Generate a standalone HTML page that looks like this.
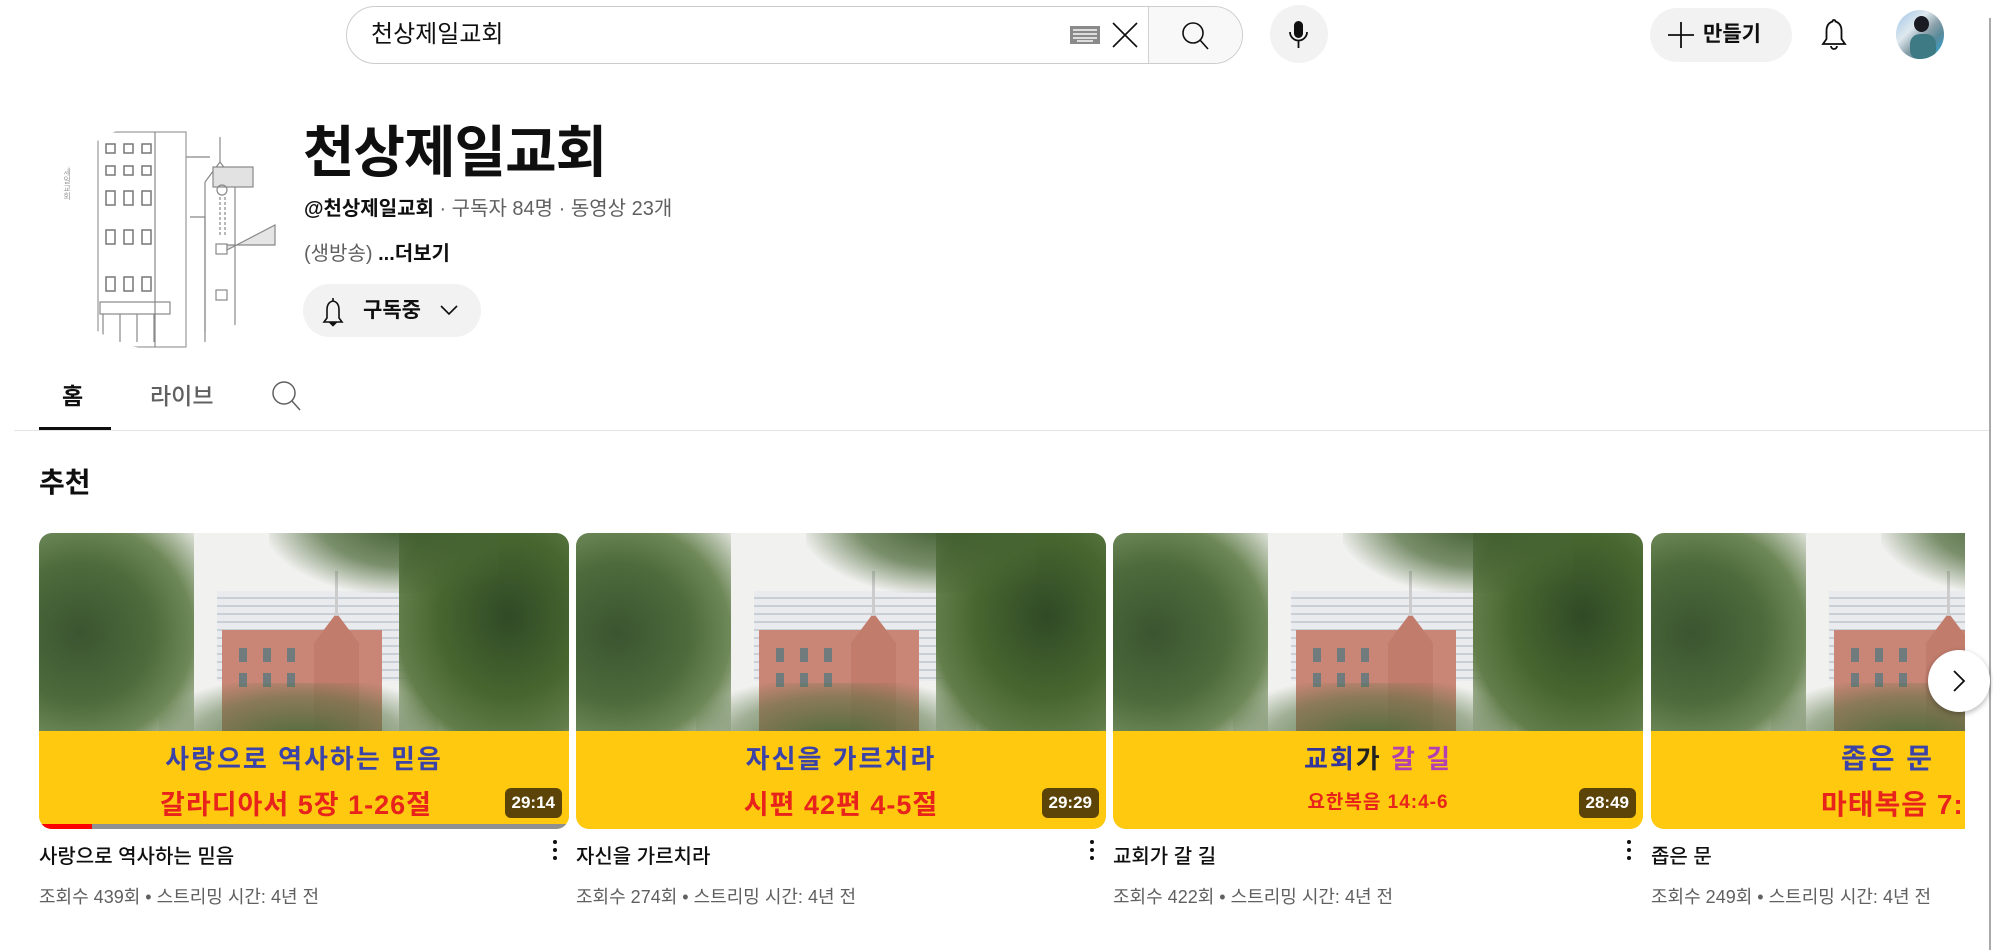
<!DOCTYPE html>
<html><head><meta charset="utf-8">
<style>
*{box-sizing:border-box;margin:0;padding:0}
body{width:1993px;height:950px;overflow:hidden;background:#fff;font-family:"Liberation Sans","Noto Sans CJK KR",sans-serif;color:#0f0f0f;position:relative}
.abs{position:absolute}
.search{left:346px;top:6px;width:897px;height:58px;border:1px solid #ccc;border-radius:29px;overflow:hidden}
.search .txt{position:absolute;left:24px;top:0;line-height:56px;font-size:24px;color:#0f0f0f}
.search .btn{position:absolute;right:0;top:0;width:94px;height:56px;background:#f8f8f8;border-left:1px solid #d3d3d3}
.circ{border-radius:50%}
.card{position:absolute;top:533px;width:530px;height:300px}
.thumb{position:absolute;left:0;top:0;width:530px;height:296px;border-radius:13px;overflow:hidden;background:#f1f1ef}
.t{position:absolute}
.band{position:absolute;left:0;top:198px;width:530px;height:98px;background:#fec90f}
.l1{position:absolute;left:0;width:530px;top:206px;text-align:center;font-size:26px;font-weight:bold;color:#3b42a8;letter-spacing:2px;line-height:40px}
.l2{position:absolute;left:0;width:530px;top:252px;text-align:center;font-size:27px;font-weight:bold;color:#e8231c;letter-spacing:1px;line-height:40px}
.dur{position:absolute;right:7px;top:255px;height:30px;padding:0 7px;background:#5c4408;color:#fff;font-size:17px;font-weight:bold;line-height:30px;border-radius:6px}
.title{position:absolute;left:0;top:310px;font-size:20px;font-weight:500;line-height:28px}
.meta{position:absolute;left:0;top:351px;font-size:18px;color:#606060;line-height:26px}
.kebab{position:absolute;right:12px;top:307px;width:4px}
.kebab i{display:block;width:4px;height:4px;border-radius:2px;background:#0f0f0f;margin-bottom:4px}
.apt{left:178px;top:58px;width:245px;height:90px;background:repeating-linear-gradient(#e9ebee 0 6px,#c9cfd4 6px 8px)}
.bld{left:183px;top:97px;width:160px;height:103px;background:#c98676}
.win{background:repeating-linear-gradient(90deg,#6f7b7c 0 8px,transparent 8px 24px)}
.tw{left:275px;top:80px;width:45px;height:120px;background:#c17c6c;clip-path:polygon(50% 0,100% 25%,100% 100%,0 100%,0 25%)}
.cr{left:296px;top:38px;width:3px;height:45px;background:#ccc}
.tl{left:-20px;top:-10px;width:175px;height:220px;background:radial-gradient(ellipse at 35% 50%,#3a5530 0%,#4d6b3c 45%,#6e8858 70%,rgba(140,160,120,0) 100%)}
.tr{left:360px;top:-20px;width:200px;height:230px;background:radial-gradient(ellipse at 55% 45%,#2f4a26 0%,#47662f 45%,#637e4b 72%,rgba(110,140,90,0) 100%)}
.tt{left:230px;top:-30px;width:230px;height:90px;background:radial-gradient(ellipse at 60% 20%,#3d5a2c 0%,rgba(70,100,50,.7) 45%,rgba(255,255,255,0) 75%)}
.tb{left:120px;top:150px;width:280px;height:60px;background:radial-gradient(ellipse at 50% 100%,#4b6a3a 0%,rgba(80,110,60,.5) 55%,rgba(0,0,0,0) 80%)}
</style></head><body>

<div class="abs search"><div class="txt">천상제일교회</div>
<svg class="abs" style="left:723px;top:19px" width="30" height="18"><rect width="30" height="18" fill="#8a8a8a"/><g fill="#ddd"><rect x="3" y="3" width="24" height="2"/><rect x="3" y="7" width="24" height="2"/><rect x="3" y="11" width="24" height="2"/><rect x="7" y="14" width="16" height="2"/></g></svg>
<svg class="abs" style="left:763px;top:13px" width="30" height="30"><path d="M3 3L27 27M27 3L3 27" stroke="#0f0f0f" stroke-width="1.6"/></svg>
<div class="btn"><svg class="abs" style="left:31px;top:14px" width="30" height="30"><circle cx="13" cy="12" r="10" fill="none" stroke="#0f0f0f" stroke-width="1.6"/><path d="M20 19L28 28" stroke="#0f0f0f" stroke-width="1.6"/></svg></div>
</div>
<div class="abs circ" style="left:1270px;top:5px;width:58px;height:58px;background:#f2f2f2"><svg class="abs" style="left:17px;top:14px" width="24" height="32"><rect x="7" y="2" width="9" height="17" rx="4.5" fill="#0f0f0f"/><path d="M3 13a8.5 8.5 0 0 0 17 0M11.5 21v8" stroke="#0f0f0f" stroke-width="1.8" fill="none"/></svg></div>
<div class="abs" style="left:1650px;top:8px;width:142px;height:54px;border-radius:27px;background:#f2f2f2">
<svg class="abs" style="left:18px;top:14px" width="26" height="26"><path d="M13 0V26M0 13H26" stroke="#0f0f0f" stroke-width="1.8"/></svg>
<div class="abs" style="left:53px;top:0;line-height:54px;font-size:21px;font-weight:bold">만들기</div></div>
<svg class="abs" style="left:1820px;top:18px" width="28" height="34"><path d="M14 2c-1 0-1.5.7-1.5 1.5C8 5 6.5 8.5 6.5 13v8L3 26h22l-3.5-5v-8c0-4.5-1.5-8-6-9.5C15.5 2.7 15 2 14 2z M11 28a3 3 0 0 0 6 0" fill="none" stroke="#0f0f0f" stroke-width="1.8"/></svg>
<div class="abs circ" style="left:1896px;top:10px;width:48px;height:49px;overflow:hidden;background:linear-gradient(135deg,#9cc4e8 0%,#dfe8ee 35%,#8aa0aa 55%,#5a8a9a 70%,#2aa8e0 100%)"><div class="abs circ" style="left:18px;top:6px;width:15px;height:16px;background:#1a1a22"></div><div class="abs" style="left:14px;top:24px;width:26px;height:26px;border-radius:10px;background:#3d7a84"></div></div>
<div class="abs" style="left:1989px;top:18px;width:2px;height:932px;background:#aaa"></div>

<div class="abs circ" style="left:45px;top:122px;width:234px;height:228px;overflow:hidden;background:#fff">
<svg width="234" height="228" style="position:absolute;left:0;top:0" fill="none" stroke="#888" stroke-width="1.2">
<rect x="53" y="10" width="88" height="215" stroke="#999"/>
<line x1="110" y1="10" x2="110" y2="225"/>
<g stroke="#777" stroke-width="1.5">
<rect x="61" y="22" width="9" height="9"/><rect x="79" y="22" width="9" height="9"/><rect x="97" y="22" width="9" height="9"/>
<rect x="61" y="44" width="9" height="9"/><rect x="79" y="44" width="9" height="9"/><rect x="97" y="44" width="9" height="9"/>
<rect x="61" y="69" width="9" height="14"/><rect x="79" y="69" width="9" height="14"/><rect x="97" y="69" width="9" height="14"/>
<rect x="61" y="108" width="9" height="14"/><rect x="79" y="108" width="9" height="14"/><rect x="97" y="108" width="9" height="14"/>
<rect x="61" y="155" width="9" height="14"/><rect x="79" y="155" width="9" height="14"/><rect x="97" y="155" width="9" height="14"/>
</g>
<rect x="55" y="180" width="70" height="12"/>
<path d="M58 192V220M75 192V220M92 192V220M109 192V220"/>
<path d="M141 35H165M175 40V10"/>
<path d="M160 60L175 40L190 60V210M160 60V210"/>
<rect x="168" y="45" width="40" height="20" fill="#e2e2e2"/>
<circle cx="177" cy="68" r="5"/>
<path d="M175 75v40M180 75v40" stroke-dasharray="3 2"/>
<rect x="171" y="122" width="11" height="10"/><rect x="171" y="168" width="11" height="10"/>
<path d="M182 128L230 103V123H182z" fill="#e5e5e5"/>
<path d="M145 95H160V220"/>
<g fill="#999" stroke="none" font-size="8"><text x="22" y="30" writing-mode="tb">천상제일교회</text></g>
</svg></div>

<div class="abs" style="left:303px;top:115px;font-size:56px;font-weight:bold;line-height:76px;letter-spacing:-1px">천상제일교회</div>
<div class="abs" style="left:304px;top:195px;font-size:20px;line-height:28px;color:#606060"><b style="color:#0f0f0f">@천상제일교회</b> · 구독자 84명 · 동영상 23개</div>
<div class="abs" style="left:304px;top:240px;font-size:20px;line-height:28px;color:#606060">(생방송) <b style="color:#0f0f0f">...더보기</b></div>
<div class="abs" style="left:303px;top:284px;width:178px;height:53px;border-radius:27px;background:#f2f2f2">
<svg class="abs" style="left:18px;top:13px" width="24" height="30"><path d="M12 1v3C7 5 6 9 6 13v8l-3 4h18l-3-4v-8c0-4-1-8-6-9M10 26.5h4l-2 2z" fill="none" stroke="#0f0f0f" stroke-width="1.6"/></svg>
<div class="abs" style="left:60px;top:0;line-height:53px;font-size:21px;font-weight:bold">구독중</div>
<svg class="abs" style="left:137px;top:20px" width="18" height="12"><path d="M1 2L9 10L17 2" fill="none" stroke="#0f0f0f" stroke-width="1.6"/></svg>
</div>

<div class="abs" style="left:62px;top:380px;font-size:23px;font-weight:bold;line-height:32px">홈</div>
<div class="abs" style="left:150px;top:380px;font-size:23px;color:#606060;font-weight:500;line-height:32px">라이브</div>
<svg class="abs" style="left:270px;top:380px" width="32" height="32"><circle cx="14" cy="13" r="11" fill="none" stroke="#606060" stroke-width="1.5"/><path d="M22 21L30 30" stroke="#606060" stroke-width="1.5"/></svg>
<div class="abs" style="left:39px;top:427px;width:72px;height:3px;background:#0f0f0f"></div>
<div class="abs" style="left:14px;top:430px;width:1975px;height:1px;background:#e5e5e5"></div>

<div class="abs" style="left:39px;top:465px;font-size:28px;font-weight:bold;line-height:36px">추천</div>

<div class="abs" style="left:0;top:0;width:1965px;height:950px;overflow:hidden">
<div class="card" style="left:39px">
 <div class="thumb">
  <div class="t apt"></div><div class="t bld"></div>
  <div class="t win" style="left:200px;top:115px;width:70px;height:14px"></div>
  <div class="t win" style="left:200px;top:140px;width:70px;height:14px"></div>
  <div class="t tw"></div><div class="t cr"></div>
  <div class="t tl"></div><div class="t tr"></div><div class="t tt"></div><div class="t tb"></div>
  <div class="band"></div>
  <div class="l1">사랑으로 역사하는 믿음</div>
  <div class="l2" style="left:-8px">갈라디아서 5장 1-26절</div>
  <div class="dur">29:14</div>
  <div class="t" style="left:0;top:291px;width:530px;height:5px;background:#909090"></div>
  <div class="t" style="left:0;top:291px;width:53px;height:5px;background:#f00"></div>
 </div>
 <div class="title">사랑으로 역사하는 믿음</div>
 <div class="meta">조회수 439회 • 스트리밍 시간: 4년 전</div>
 <div class="kebab"><i></i><i></i><i></i></div>
</div>

<div class="card" style="left:576px">
 <div class="thumb">
  <div class="t apt"></div><div class="t bld"></div>
  <div class="t win" style="left:200px;top:115px;width:70px;height:14px"></div>
  <div class="t win" style="left:200px;top:140px;width:70px;height:14px"></div>
  <div class="t tw"></div><div class="t cr"></div>
  <div class="t tl"></div><div class="t tr"></div><div class="t tt"></div><div class="t tb"></div>
  <div class="band"></div>
  <div class="l1">자신을 가르치라</div>
  <div class="l2">시편 42편 4-5절</div>
  <div class="dur">29:29</div>
 </div>
 <div class="title">자신을 가르치라</div>
 <div class="meta">조회수 274회 • 스트리밍 시간: 4년 전</div>
 <div class="kebab"><i></i><i></i><i></i></div>
</div>

<div class="card" style="left:1113px">
 <div class="thumb">
  <div class="t apt"></div><div class="t bld"></div>
  <div class="t win" style="left:200px;top:115px;width:70px;height:14px"></div>
  <div class="t win" style="left:200px;top:140px;width:70px;height:14px"></div>
  <div class="t tw"></div><div class="t cr"></div>
  <div class="t tl"></div><div class="t tr"></div><div class="t tt"></div><div class="t tb"></div>
  <div class="band"></div>
  <div class="l1"><span style="color:#34359a">교회</span><span style="color:#222">가</span> <span style="color:#b33fb0">갈 길</span></div>
  <div class="l2" style="font-size:19px;top:250px">요한복음 14:4-6</div>
  <div class="dur">28:49</div>
 </div>
 <div class="title">교회가 갈 길</div>
 <div class="meta">조회수 422회 • 스트리밍 시간: 4년 전</div>
 <div class="kebab"><i></i><i></i><i></i></div>
</div>

<div class="card" style="left:1651px">
 <div class="thumb">
  <div class="t apt"></div><div class="t bld"></div>
  <div class="t win" style="left:200px;top:115px;width:70px;height:14px"></div>
  <div class="t win" style="left:200px;top:140px;width:70px;height:14px"></div>
  <div class="t tw"></div><div class="t cr"></div>
  <div class="t tl"></div><div class="t tt"></div><div class="t tb"></div>
  <div class="band"></div>
  <div class="l1" style="left:190px;width:auto;text-align:left;font-size:28px">좁은 문</div>
  <div class="l2" style="left:170px;width:auto;text-align:left;font-size:28px">마태복음 7:13</div>
 </div>
 <div class="title">좁은 문</div>
 <div class="meta">조회수 249회 • 스트리밍 시간: 4년 전</div>
</div>
</div>

<div class="abs circ" style="left:1928px;top:650px;width:62px;height:62px;background:#fff;box-shadow:0 2px 6px rgba(0,0,0,.3)">
<svg class="abs" style="left:24px;top:20px" width="14" height="22"><path d="M2 1L12 11L2 21" fill="none" stroke="#0f0f0f" stroke-width="1.8"/></svg></div>

</body></html>
